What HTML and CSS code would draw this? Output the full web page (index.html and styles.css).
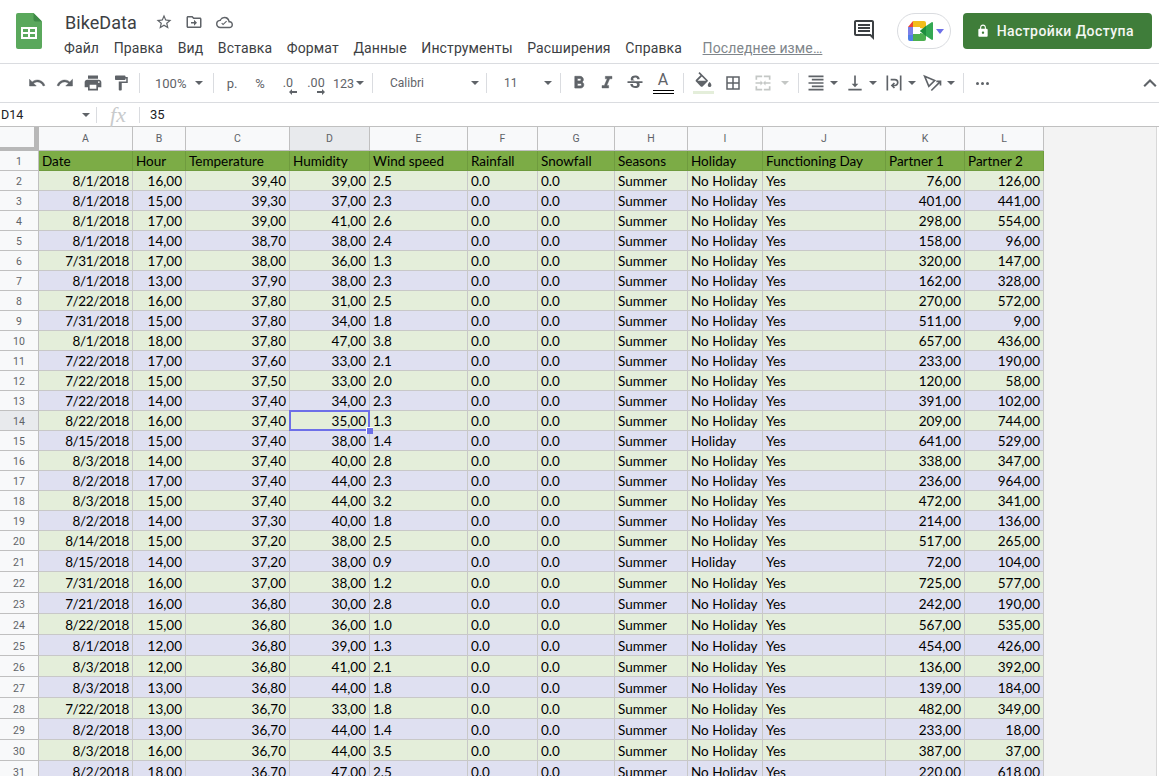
FILE: index.html
```html
<!DOCTYPE html>
<html lang="ru">
<head>
<meta charset="utf-8">
<title>BikeData</title>
<link rel="stylesheet" href="styles.css">
</head>
<body>
<div class="app">
<header class="top">
  <svg class="logo" width="26" height="36" viewBox="0 0 26 36"><path fill="#5aa85c" d="M2 0h15.500L26 8.500V34a2 2 0 0 1-2 2H2a2 2 0 0 1-2-2V2a2 2 0 0 1 2-2z"/><path fill="#3e8a47" d="M17.500 0L26 8.500h-6.500a2 2 0 0 1-2-2z"/><path fill="#fff" fill-rule="evenodd" d="M5 14h16v12H5zm2 2v3h5v-3zm7 0v3h5v-3zm-7 5v3h5v-3zm7 0v3h5v-3z"/></svg>
  <div class="titles">
    <div class="titlerow">
      <span class="doc">BikeData</span>
      <svg class="ti first" width="18" height="18" viewBox="0 0 24 24"><path fill="#5f6368" d="M22 9.240l-7.190-.62L12 2 9.190 8.630 2 9.240l5.460 4.730L5.820 21 12 17.270 18.180 21l-1.630-7.030L22 9.240zM12 15.400l-3.760 2.270 1-4.280-3.320-2.880 4.380-.38L12 6.100l1.710 4.040 4.380.38-3.320 2.880 1 4.280L12 15.400z"/></svg>
      <svg class="ti" width="18" height="18" viewBox="0 0 24 24"><path fill="#5f6368" d="M20 6h-8l-2-2H4c-1.100 0-2 .9-2 2v12c0 1.100.9 2 2 2h16c1.100 0 2-.9 2-2V8c0-1.100-.9-2-2-2zm0 12H4V6h5.170l2 2H20v10zm-8-1l4-4-4-4v3H8v2h4v3z"/></svg>
      <svg class="ti cloud" width="17" height="17" viewBox="0 0 24 24"><path fill="#5f6368" d="M19.350 10.040A7.490 7.490 0 0 0 12 4a7.480 7.480 0 0 0-6.650 4.040A5.990 5.990 0 0 0 0 14c0 3.310 2.690 6 6 6h13c2.760 0 5-2.240 5-5 0-2.640-2.050-4.780-4.650-4.960zM19 18H6c-2.210 0-4-1.790-4-4s1.790-4 4-4h.71A5.500 5.500 0 0 1 12 6c2.620 0 4.880 1.860 5.390 4.430l.3 1.500 1.530.11A2.980 2.980 0 0 1 22 15c0 1.650-1.350 3-3 3zm-9-2l-2.500-2.500 1.060-1.060L10 13.880l4.440-4.440 1.060 1.060z"/></svg>
    </div>
    <nav class="menu">
      <span class="mi">Файл</span><span class="mi">Правка</span><span class="mi">Вид</span><span class="mi">Вставка</span><span class="mi">Формат</span><span class="mi">Данные</span><span class="mi">Инструменты</span><span class="mi">Расширения</span><span class="mi">Справка</span><span class="last">Последнее изме…</span>
    </nav>
  </div>
  <div class="actions">
    <svg class="chat" width="24" height="24" viewBox="0 0 24 24"><path fill="#3c4043" d="M22 4c0-1.100-.9-2-2-2H4c-1.100 0-2 .9-2 2v12c0 1.100.9 2 2 2h14l4 4V4zm-2 13.170L18.830 16H4V4h16v13.170zM6 12h12v2H6zm0-3h12v2H6zm0-3h12v2H6z"/></svg>
    <div class="meet">
      <svg width="25" height="20" viewBox="0 0 25 20"><path fill="#ea4335" d="M5 0v6H0z"/><path fill="#f2bd1c" d="M5 0h11a2 2 0 0 1 2 2v6l-6-1V6H5z"/><path fill="#7b7fe8" d="M0 6h5v8H0z"/><path fill="#4f7fe6" d="M0 14h5v6H2a2 2 0 0 1-2-2z"/><path fill="#4caf50" d="M5 13h7v-1l6 1v5a2 2 0 0 1-2 2H5z"/><path fill="#34a853" d="M12 10l6-5 6-4a1 1 0 0 1 1 1v16a1 1 0 0 1-1 1l-6-4z"/><path fill="#1e8e3e" d="M12 10l6-5v10z"/></svg>
      <i class="meetcaret"></i>
    </div>
    <div class="share">
      <svg width="14" height="14" viewBox="0 0 24 24"><path fill="#fff" d="M18 8h-1V6c0-2.760-2.240-5-5-5S7 3.240 7 6v2H6c-1.100 0-2 .9-2 2v10c0 1.100.9 2 2 2h12c1.100 0 2-.9 2-2V10c0-1.100-.9-2-2-2zm-6 9c-1.100 0-2-.9-2-2s.9-2 2-2 2 .9 2 2-.9 2-2 2zm3.100-9H8.900V6c0-1.710 1.390-3.100 3.100-3.100s3.100 1.390 3.100 3.100v2z"/></svg>
      <span>Настройки Доступа</span>
    </div>
  </div>
</header>

<div class="toolbar">
  <span class="b"><svg width="18" height="18" viewBox="0 0 24 24"><path fill="#5f6368" stroke="#5f6368" stroke-width=".6" d="M12.500 8c-2.650 0-5.050.99-6.900 2.600L2 7v9h9l-3.620-3.620c1.390-1.160 3.160-1.880 5.120-1.880 3.540 0 6.550 2.310 7.600 5.500l2.370-.78C21.080 11.030 17.150 8 12.500 8z"/></svg></span>
  <span class="b"><svg width="18" height="18" viewBox="0 0 24 24"><path fill="#5f6368" stroke="#5f6368" stroke-width=".6" d="M18.400 10.600C16.550 8.990 14.150 8 11.500 8c-4.650 0-8.580 3.030-9.960 7.220L3.900 16c1.050-3.190 4.050-5.500 7.600-5.500 1.950 0 3.730.72 5.120 1.880L13 16h9V7l-3.600 3.600z"/></svg></span>
  <span class="b"><svg width="20" height="20" viewBox="0 0 24 24"><path fill="#5f6368" d="M19 8H5c-1.660 0-3 1.340-3 3v6h4v4h12v-4h4v-6c0-1.660-1.340-3-3-3zm-3 11H8v-5h8v5zm3-7c-.55 0-1-.45-1-1s.45-1 1-1 1 .45 1 1-.45 1-1 1zm-1-9H6v4h12V3z"/></svg></span>
  <span class="b"><svg width="18" height="18" viewBox="0 0 24 24"><path fill="#5f6368" d="M18 4V3c0-.55-.45-1-1-1H5c-.55 0-1 .45-1 1v4c0 .55.45 1 1 1h12c.55 0 1-.45 1-1V6h1v4H9v11c0 .55.45 1 1 1h2c.55 0 1-.45 1-1v-9h8V4h-3z"/></svg></span>
  <i class="sep"></i>
  <span class="dd zoomdd"><span class="ddt">100%</span><i class="caret"></i></span>
  <i class="sep"></i>
  <span class="b t">р.</span>
  <span class="b t">%</span>
  <span class="b t dec">.0<svg width="8" height="6" viewBox="0 0 8 6"><path fill="#5f6368" d="M0 3l3-3v2h5v2H3v2z"/></svg></span>
  <span class="b t dec">.00<svg width="8" height="6" viewBox="0 0 8 6"><path fill="#5f6368" d="M8 3L5 0v2H0v2h5v2z"/></svg></span>
  <span class="dd fmt"><span class="ddt">123</span><i class="caret"></i></span>
  <i class="sep"></i>
  <span class="dd fontdd"><span class="ddt">Calibri</span><i class="caret"></i></span>
  <i class="sep"></i>
  <span class="dd sizedd"><span class="ddt">11</span><i class="caret"></i></span>
  <i class="sep"></i>
  <span class="b"><svg width="20" height="20" viewBox="0 0 24 24"><path fill="#5f6368" stroke="#5f6368" stroke-width=".8" d="M15.600 10.790c.97-.67 1.650-1.770 1.650-2.790 0-2.260-1.750-4-4-4H7v14h7.040c2.090 0 3.710-1.700 3.710-3.790 0-1.520-.86-2.820-2.150-3.420zM10 6.500h3c.83 0 1.500.67 1.500 1.500s-.67 1.500-1.500 1.500h-3v-3zm3.500 9H10v-3h3.500c.83 0 1.500.67 1.500 1.500s-.67 1.500-1.500 1.500z"/></svg></span>
  <span class="b"><svg width="20" height="20" viewBox="0 0 24 24"><path fill="#5f6368" stroke="#5f6368" stroke-width=".5" d="M10 4v3h2.210l-3.420 8H6v3h8v-3h-2.210l3.420-8H18V4z"/></svg></span>
  <span class="b"><svg width="20" height="20" viewBox="0 0 24 24"><path fill="#5f6368" d="M6.850 7.080C6.850 4.370 9.450 3 12.240 3c1.640 0 3 .49 3.900 1.280.77.65 1.460 1.730 1.460 3.240h-3.010c0-.31-.05-.59-.15-.85-.29-.86-1.200-1.280-2.250-1.280-1.860 0-2.340 1.020-2.340 1.700 0 .48.25.88.74 1.210.38.25.77.48 1.410.7H7.390c-.21-.34-.54-.89-.54-1.920zM21 12v-2H3v2h9.620c1.150.45 1.960.75 1.960 1.970 0 1-.81 1.670-2.280 1.670-1.540 0-2.930-.54-2.930-2.510H6.400c0 .55.08 1.130.24 1.580.81 2.290 3.290 3.300 5.670 3.300 2.270 0 5.300-.89 5.300-4.050 0-.3-.01-1.160-.48-1.940H21V12z"/></svg></span>
  <span class="b colorb"><span class="atext">A</span><i class="underline"></i></span>
  <i class="sep seps"></i>
  <span class="b"><svg class="fill" width="21" height="22" viewBox="0 0 21 22"><path fill="#5f6368" d="M14.500 8L6.600 0 5.400 1.200 7.500 3.300 3 7.800c-.5.500-.5 1.300 0 1.800l4.800 4.800c.3.300.6.400.9.400s.7-.1.900-.4l4.900-4.800c.5-.5.5-1.300 0-1.600zM4.600 8.800L8.800 4.600 13 8.800H4.600zM16.600 10.100s-1.800 1.900-1.800 3.100c0 1 .8 1.800 1.800 1.800s1.800-.8 1.800-1.800c0-1.200-1.800-3.100-1.800-3.100z"/><rect y="19" width="21" height="3" fill="#e4eeda"/></svg></span>
  <span class="b bord"><svg width="18" height="18" viewBox="0 0 24 24"><path fill="#5f6368" d="M3 3v18h18V3H3zm8 16H5v-6h6v6zm0-8H5V5h6v6zm8 8h-6v-6h6v6zm0-8h-6V5h6v6z"/></svg></span>
  <span class="b mrg"><svg width="20" height="20" viewBox="0 0 24 24"><path fill="#c4c7c5" d="M3 3h8v2H5v3H3zm10 0h8v5h-2V5h-6zM3 16h2v3h6v2H3zm16 0h2v5h-8v-2h6zM3 11h6V9l3 3-3 3v-2H3zm18 0v2h-6v2l-3-3 3-3v2z"/></svg><i class="caret dim"></i></span>
  <i class="sep sepm"></i>
  <span class="b wd"><svg width="20" height="20" viewBox="0 0 24 24"><path fill="#5f6368" d="M3 3h18v2H3zm4 4h14v2H7zM3 11h18v2H3zm4 4h14v2H7zM3 19h18v2H3z"/></svg><i class="caret"></i></span>
  <span class="b wd"><svg width="20" height="20" viewBox="0 0 24 24"><path fill="#5f6368" d="M16 13h-3V3h-2v10H8l4 4 4-4zM4 19v2h16v-2H4z"/></svg><i class="caret"></i></span>
  <span class="b wd"><svg width="20" height="20" viewBox="0 0 24 24"><path fill="none" stroke="#5f6368" stroke-width="2" d="M4 3v18M20 3v18M8 8h5a3.500 3.500 0 0 1 0 7h-3m2.500-3L9.500 15l3 3"/></svg><i class="caret"></i></span>
  <span class="b wd"><svg width="20" height="20" viewBox="0 0 24 24"><path fill="none" stroke="#5f6368" stroke-width="2" d="M2 4l12 5-7 7zM10 21l11-11m-5 0h5v5"/></svg><i class="caret"></i></span>
  <i class="sep"></i>
  <span class="b more"><i></i><i></i><i></i></span>
  <span class="grow"></span>
  <svg class="collapse" width="20" height="20" viewBox="0 0 24 24"><path fill="none" stroke="#5f6368" stroke-width="2.500" d="M5 16l7-7 7 7"/></svg>
</div>

<div class="fbar">
  <div class="namebox"><span>D14</span><i class="caret"></i></div>
  <div class="fx">fx</div>
  <div class="fval">35</div>
</div>

<div class="sheet">
<table class="grid">
<colgroup><col class="c0"><col class="ca"><col class="cb"><col class="cc"><col class="cd"><col class="ce"><col class="cf"><col class="cg"><col class="ch"><col class="ci"><col class="cj"><col class="ck"><col class="cl"></colgroup>
<thead><tr><th class="corner"></th><th>A</th><th>B</th><th>C</th><th class="on">D</th><th>E</th><th>F</th><th>G</th><th>H</th><th>I</th><th>J</th><th>K</th><th>L</th></tr></thead>
<tbody>
<tr class="hd"><th class="rn">1</th><td>Date</td><td>Hour</td><td>Temperature</td><td>Humidity</td><td>Wind speed</td><td>Rainfall</td><td>Snowfall</td><td>Seasons</td><td>Holiday</td><td>Functioning Day</td><td>Partner 1</td><td>Partner 2</td></tr>
<tr class="g"><th class="rn">2</th><td class="n">8/1/2018</td><td class="n">16,00</td><td class="n">39,40</td><td class="n">39,00</td><td>2.5</td><td>0.0</td><td>0.0</td><td>Summer</td><td>No Holiday</td><td>Yes</td><td class="n">76,00</td><td class="n">126,00</td></tr>
<tr class="p"><th class="rn">3</th><td class="n">8/1/2018</td><td class="n">15,00</td><td class="n">39,30</td><td class="n">37,00</td><td>2.3</td><td>0.0</td><td>0.0</td><td>Summer</td><td>No Holiday</td><td>Yes</td><td class="n">401,00</td><td class="n">441,00</td></tr>
<tr class="g"><th class="rn">4</th><td class="n">8/1/2018</td><td class="n">17,00</td><td class="n">39,00</td><td class="n">41,00</td><td>2.6</td><td>0.0</td><td>0.0</td><td>Summer</td><td>No Holiday</td><td>Yes</td><td class="n">298,00</td><td class="n">554,00</td></tr>
<tr class="p"><th class="rn">5</th><td class="n">8/1/2018</td><td class="n">14,00</td><td class="n">38,70</td><td class="n">38,00</td><td>2.4</td><td>0.0</td><td>0.0</td><td>Summer</td><td>No Holiday</td><td>Yes</td><td class="n">158,00</td><td class="n">96,00</td></tr>
<tr class="g"><th class="rn">6</th><td class="n">7/31/2018</td><td class="n">17,00</td><td class="n">38,00</td><td class="n">36,00</td><td>1.3</td><td>0.0</td><td>0.0</td><td>Summer</td><td>No Holiday</td><td>Yes</td><td class="n">320,00</td><td class="n">147,00</td></tr>
<tr class="p"><th class="rn">7</th><td class="n">8/1/2018</td><td class="n">13,00</td><td class="n">37,90</td><td class="n">38,00</td><td>2.3</td><td>0.0</td><td>0.0</td><td>Summer</td><td>No Holiday</td><td>Yes</td><td class="n">162,00</td><td class="n">328,00</td></tr>
<tr class="g"><th class="rn">8</th><td class="n">7/22/2018</td><td class="n">16,00</td><td class="n">37,80</td><td class="n">31,00</td><td>2.5</td><td>0.0</td><td>0.0</td><td>Summer</td><td>No Holiday</td><td>Yes</td><td class="n">270,00</td><td class="n">572,00</td></tr>
<tr class="p"><th class="rn">9</th><td class="n">7/31/2018</td><td class="n">15,00</td><td class="n">37,80</td><td class="n">34,00</td><td>1.8</td><td>0.0</td><td>0.0</td><td>Summer</td><td>No Holiday</td><td>Yes</td><td class="n">511,00</td><td class="n">9,00</td></tr>
<tr class="g"><th class="rn">10</th><td class="n">8/1/2018</td><td class="n">18,00</td><td class="n">37,80</td><td class="n">47,00</td><td>3.8</td><td>0.0</td><td>0.0</td><td>Summer</td><td>No Holiday</td><td>Yes</td><td class="n">657,00</td><td class="n">436,00</td></tr>
<tr class="p"><th class="rn">11</th><td class="n">7/22/2018</td><td class="n">17,00</td><td class="n">37,60</td><td class="n">33,00</td><td>2.1</td><td>0.0</td><td>0.0</td><td>Summer</td><td>No Holiday</td><td>Yes</td><td class="n">233,00</td><td class="n">190,00</td></tr>
<tr class="g"><th class="rn">12</th><td class="n">7/22/2018</td><td class="n">15,00</td><td class="n">37,50</td><td class="n">33,00</td><td>2.0</td><td>0.0</td><td>0.0</td><td>Summer</td><td>No Holiday</td><td>Yes</td><td class="n">120,00</td><td class="n">58,00</td></tr>
<tr class="p"><th class="rn">13</th><td class="n">7/22/2018</td><td class="n">14,00</td><td class="n">37,40</td><td class="n">34,00</td><td>2.3</td><td>0.0</td><td>0.0</td><td>Summer</td><td>No Holiday</td><td>Yes</td><td class="n">391,00</td><td class="n">102,00</td></tr>
<tr class="g"><th class="rn on">14</th><td class="n">8/22/2018</td><td class="n">16,00</td><td class="n">37,40</td><td class="n sel">35,00<i class="selbox"></i><i class="handle"></i></td><td>1.3</td><td>0.0</td><td>0.0</td><td>Summer</td><td>No Holiday</td><td>Yes</td><td class="n">209,00</td><td class="n">744,00</td></tr>
<tr class="p"><th class="rn">15</th><td class="n">8/15/2018</td><td class="n">15,00</td><td class="n">37,40</td><td class="n">38,00</td><td>1.4</td><td>0.0</td><td>0.0</td><td>Summer</td><td>Holiday</td><td>Yes</td><td class="n">641,00</td><td class="n">529,00</td></tr>
<tr class="g"><th class="rn">16</th><td class="n">8/3/2018</td><td class="n">14,00</td><td class="n">37,40</td><td class="n">40,00</td><td>2.8</td><td>0.0</td><td>0.0</td><td>Summer</td><td>No Holiday</td><td>Yes</td><td class="n">338,00</td><td class="n">347,00</td></tr>
<tr class="p"><th class="rn">17</th><td class="n">8/2/2018</td><td class="n">17,00</td><td class="n">37,40</td><td class="n">44,00</td><td>2.3</td><td>0.0</td><td>0.0</td><td>Summer</td><td>No Holiday</td><td>Yes</td><td class="n">236,00</td><td class="n">964,00</td></tr>
<tr class="g"><th class="rn">18</th><td class="n">8/3/2018</td><td class="n">15,00</td><td class="n">37,40</td><td class="n">44,00</td><td>3.2</td><td>0.0</td><td>0.0</td><td>Summer</td><td>No Holiday</td><td>Yes</td><td class="n">472,00</td><td class="n">341,00</td></tr>
<tr class="p"><th class="rn">19</th><td class="n">8/2/2018</td><td class="n">14,00</td><td class="n">37,30</td><td class="n">40,00</td><td>1.8</td><td>0.0</td><td>0.0</td><td>Summer</td><td>No Holiday</td><td>Yes</td><td class="n">214,00</td><td class="n">136,00</td></tr>
<tr class="g"><th class="rn">20</th><td class="n">8/14/2018</td><td class="n">15,00</td><td class="n">37,20</td><td class="n">38,00</td><td>2.5</td><td>0.0</td><td>0.0</td><td>Summer</td><td>No Holiday</td><td>Yes</td><td class="n">517,00</td><td class="n">265,00</td></tr>
<tr class="p tall"><th class="rn">21</th><td class="n">8/15/2018</td><td class="n">14,00</td><td class="n">37,20</td><td class="n">38,00</td><td>0.9</td><td>0.0</td><td>0.0</td><td>Summer</td><td>Holiday</td><td>Yes</td><td class="n">72,00</td><td class="n">104,00</td></tr>
<tr class="g tall"><th class="rn">22</th><td class="n">7/31/2018</td><td class="n">16,00</td><td class="n">37,00</td><td class="n">38,00</td><td>1.2</td><td>0.0</td><td>0.0</td><td>Summer</td><td>No Holiday</td><td>Yes</td><td class="n">725,00</td><td class="n">577,00</td></tr>
<tr class="p tall"><th class="rn">23</th><td class="n">7/21/2018</td><td class="n">16,00</td><td class="n">36,80</td><td class="n">30,00</td><td>2.8</td><td>0.0</td><td>0.0</td><td>Summer</td><td>No Holiday</td><td>Yes</td><td class="n">242,00</td><td class="n">190,00</td></tr>
<tr class="g tall"><th class="rn">24</th><td class="n">8/22/2018</td><td class="n">15,00</td><td class="n">36,80</td><td class="n">36,00</td><td>1.0</td><td>0.0</td><td>0.0</td><td>Summer</td><td>No Holiday</td><td>Yes</td><td class="n">567,00</td><td class="n">535,00</td></tr>
<tr class="p tall"><th class="rn">25</th><td class="n">8/1/2018</td><td class="n">12,00</td><td class="n">36,80</td><td class="n">39,00</td><td>1.3</td><td>0.0</td><td>0.0</td><td>Summer</td><td>No Holiday</td><td>Yes</td><td class="n">454,00</td><td class="n">426,00</td></tr>
<tr class="g tall"><th class="rn">26</th><td class="n">8/3/2018</td><td class="n">12,00</td><td class="n">36,80</td><td class="n">41,00</td><td>2.1</td><td>0.0</td><td>0.0</td><td>Summer</td><td>No Holiday</td><td>Yes</td><td class="n">136,00</td><td class="n">392,00</td></tr>
<tr class="p tall"><th class="rn">27</th><td class="n">8/3/2018</td><td class="n">13,00</td><td class="n">36,80</td><td class="n">44,00</td><td>1.8</td><td>0.0</td><td>0.0</td><td>Summer</td><td>No Holiday</td><td>Yes</td><td class="n">139,00</td><td class="n">184,00</td></tr>
<tr class="g tall"><th class="rn">28</th><td class="n">7/22/2018</td><td class="n">13,00</td><td class="n">36,70</td><td class="n">33,00</td><td>1.8</td><td>0.0</td><td>0.0</td><td>Summer</td><td>No Holiday</td><td>Yes</td><td class="n">482,00</td><td class="n">349,00</td></tr>
<tr class="p tall"><th class="rn">29</th><td class="n">8/2/2018</td><td class="n">13,00</td><td class="n">36,70</td><td class="n">44,00</td><td>1.4</td><td>0.0</td><td>0.0</td><td>Summer</td><td>No Holiday</td><td>Yes</td><td class="n">233,00</td><td class="n">18,00</td></tr>
<tr class="g tall"><th class="rn">30</th><td class="n">8/3/2018</td><td class="n">16,00</td><td class="n">36,70</td><td class="n">44,00</td><td>3.5</td><td>0.0</td><td>0.0</td><td>Summer</td><td>No Holiday</td><td>Yes</td><td class="n">387,00</td><td class="n">37,00</td></tr>
<tr class="p tall"><th class="rn">31</th><td class="n">8/2/2018</td><td class="n">18,00</td><td class="n">36,70</td><td class="n">47,00</td><td>2.5</td><td>0.0</td><td>0.0</td><td>Summer</td><td>No Holiday</td><td>Yes</td><td class="n">220,00</td><td class="n">618,00</td></tr>
</tbody>
</table>
<div class="gutter"></div>
</div>
</div>
</body>
</html>
```

FILE: styles.css
```css
* { box-sizing: border-box; }
html, body { margin: 0; height: 100%; overflow: hidden; background: #fff; }
body { font-family: Roboto, "Liberation Sans", sans-serif; color: #202124; }
.app { display: flex; flex-direction: column; height: 776px; width: 1159px; overflow: hidden; }

.top { display: flex; height: 64px; border-bottom: 1px solid #dadce0; padding-left: 16px; flex: none; }
.logo { margin-top: 13px; flex: none; }
.titles { margin-left: 23px; flex: 1; min-width: 0; padding-top: 10px; }
.titlerow { display: flex; align-items: center; height: 24px; }
.doc { font-size: 18px; color: #3c4043; width: 73px; letter-spacing: .05px; }
.ti { margin-left: 12px; }
.ti.first { margin-left: 17px; }
.ti.cloud { margin-left: 13px; }
.menu { display: flex; margin-top: 5px; font-size: 14px; line-height: 18px; margin-left: -1px; letter-spacing: .12px; }
.mi { margin-right: 14.600px; color: #3c4043; white-space: nowrap; }
.last { margin-left: 6px; color: #80868b; text-decoration: underline; white-space: nowrap; }
.actions { display: flex; align-items: flex-start; flex: none; padding-right: 7px; padding-top: 13px; }
.chat { margin-top: 5px; margin-right: 21px; }
.meet { width: 54px; height: 36px; border: 1px solid #dadce0; border-radius: 18px; display: flex; align-items: center; padding-left: 10px; gap: 3px; margin-right: 12px; }
.meet svg { flex: none; }
.meetcaret { border: 4px solid transparent; border-top: 5px solid #6d6fe8; border-bottom: 0; }
.share { width: 189px; height: 36px; border-radius: 4px; background: #3f7d3a; color: #f4f7f3; display: flex; align-items: center; justify-content: center; gap: 6.500px; padding-right: 5px; font-size: 14px; font-weight: 500; letter-spacing: .43px; }

.toolbar { display: flex; align-items: center; height: 39px; border-bottom: 1px solid #dadce0; padding-left: 23px; flex: none; color: #5f6368; }
.b { width: 28px; height: 28px; display: flex; align-items: center; justify-content: center; flex: none; }
.sep { width: 1px; height: 20px; background: #dadce0; margin: 0 4px; flex: none; }
.seps { margin-left: 6px; margin-right: 5px; }
.sepm { margin-left: 7px; }
.t { font-size: 13px; color: #5f6368; }
.dec { flex-direction: column; line-height: 11px; font-size: 12.500px; padding-top: 5px; }
.dec svg { margin: 1px 0 0 10px; }
.dd { display: flex; align-items: center; justify-content: space-between; height: 28px; flex: none; font-size: 13px; color: #5f6368; }
.zoomdd { width: 65px; padding: 0 6px 0 11px; }
.fmt { width: 38px; padding-left: 3px; justify-content: flex-start; gap: 2px; font-size: 12.500px; }
.fontdd { width: 105px; padding: 0 3px 0 13px; font-size: 12px; }
.sizedd { width: 65px; padding: 0 4px 0 13px; font-size: 12px; }
.caret { display: block; flex: none; border: 4px solid transparent; border-top: 4px solid #5f6368; border-bottom: 0; }
.caret.dim { border-top-color: #c4c7c5; margin-left: 8px; }
.colorb { flex-direction: column; justify-content: flex-start; }
.atext { font-size: 16px; line-height: 20px; margin-top: 1px; }
.underline { display: block; width: 21px; height: 4px; border-top: 1px solid #000; border-bottom: 1px solid #000; }
.bord { margin-left: 2px; }
.mrg { width: 42px; margin-left: 2px; justify-content: flex-start; padding-left: 4px; }
.wd { width: 39px; justify-content: flex-start; padding-left: 3px; gap: 4px; }
.more { gap: 2px; }
.more i { width: 3px; height: 3px; border-radius: 50%; background: #5f6368; display: block; }
.grow { flex: 1; }
.collapse { margin-right: -1px; }

.fbar { display: flex; align-items: center; height: 24px; border-bottom: 1px solid #c0c0c0; flex: none; font-size: 13px; color: #202124; }
.namebox { width: 97px; display: flex; align-items: center; justify-content: space-between; padding: 0 6px 0 1px; border-right: 1px solid #dadce0; height: 16px; font-size: 12.500px; }
.fx { width: 43px; text-align: center; font-family: "Liberation Serif", serif; font-style: italic; font-size: 22px; color: #c8cacc; border-right: 1px solid #dadce0; height: 16px; line-height: 16px; }
.fval { padding-left: 10px; }

.sheet { flex: 1; min-height: 0; display: flex; background: #fff; overflow: hidden; }
.grid { border-collapse: separate; border-spacing: 0; table-layout: fixed; width: 1044px; flex: none; font-family: Lato, sans-serif; font-size: 13.500px; color: #000; align-self: flex-start; }
.c0 { width: 39px; } .ca { width: 94px; } .cb { width: 53px; } .cc { width: 104px; } .cd { width: 80px; }
.ce { width: 98px; } .cf { width: 70px; } .cg { width: 77px; } .ch { width: 73px; } .ci { width: 75px; }
.cj { width: 123px; } .ck { width: 79px; } .cl { width: 79px; }
thead th { height: 24px; background: #f8f9fa; font: 400 10.500px Roboto, sans-serif; color: #5f6368; border-right: 1px solid #c0c0c0; border-bottom: 1px solid #c0c0c0; padding: 0; }
thead th.on { background: #e8eaed; }
thead th.corner { border-right: 5px solid #b8b8b8; border-bottom: 4px solid #b8b8b8; background: #f8f9fa; }
.rn { background: #f8f9fa; font: 400 10.500px Roboto, sans-serif; color: #5f6368; border-right: 1px solid #c0c0c0; border-bottom: 1px solid #c0c0c0; padding: 2px 0 0; }
.rn.on { background: #e8eaed; }
td { height: 20px; padding: 2px 3px 0; border-right: 1px solid #c8c8c8; border-bottom: 1px solid #c8c8c8; white-space: nowrap; overflow: hidden; line-height: 17px; }
.tall td, .tall th { height: 21px; }
.n { text-align: right; }
.n:nth-child(2) { letter-spacing: -.35px; }
.hd td { background: #7cac46; border-color: #6f9b3e; }
.g td { background: #e4eeda; }
.p td { background: #dfe0f1; }
td.sel { position: relative; overflow: visible; }
.selbox { position: absolute; left: -1px; top: -1px; right: -1px; bottom: -1px; border: 2px solid #6d6fe8; }
.handle { position: absolute; right: -4px; bottom: -4px; width: 7px; height: 7px; background: #6d6fe8; border: solid #fff; border-width: 1px 0 0 1px; }
.gutter { flex: none; width: 113px; background: #f3f3f3; border-right: 1px solid #d8d8d8; }
```
